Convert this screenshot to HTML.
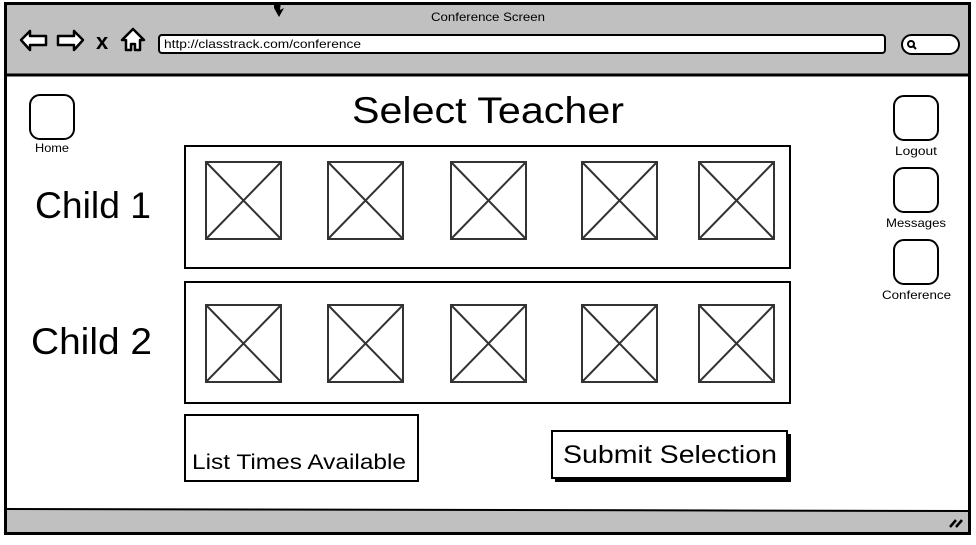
<!DOCTYPE html>
<html><head><style>
body{margin:0;width:976px;height:540px;overflow:hidden;background:#fff;font-family:"Liberation Sans",sans-serif}
svg text{font-family:"Liberation Sans",sans-serif;fill:#000}
</style></head><body>
<svg width="976" height="540" viewBox="0 0 976 540" xmlns="http://www.w3.org/2000/svg">
<rect x="5" y="3" width="965" height="72" fill="#c0c0c0"/>
<rect x="5" y="510" width="965" height="24" fill="#c0c0c0"/>
<rect x="5.5" y="3.5" width="964" height="530" fill="none" stroke="#000" stroke-width="3"/>
<line x1="5" y1="75" x2="970" y2="75" stroke="#000" stroke-width="3"/>
<line x1="5" y1="509" x2="970" y2="511" stroke="#000" stroke-width="2"/>
<text x="431" y="21" font-size="12" textLength="114" lengthAdjust="spacingAndGlyphs">Conference Screen</text>
<path d="M274 2 L281 2 L280 10 L284 8 L279 17 L274 8 Z" fill="#000"/>
<path d="M21 40 L30 31 L30 36 L46 36 L46 45 L30 45 L30 50 Z" fill="#fff" stroke="#000" stroke-width="2.5" stroke-linejoin="round"/>
<path d="M83 40 L74 31 L74 36 L58 36 L58 45 L74 45 L74 50 Z" fill="#fff" stroke="#000" stroke-width="2.5" stroke-linejoin="round"/>
<text x="96" y="49" font-size="22" font-weight="bold">x</text>
<path d="M133 29 L144 40 L140 40 L140 50 L135 50 L135 44 L131 44 L131 50 L126 50 L126 40 L122 40 Z" fill="#fff" stroke="#000" stroke-width="2.5" stroke-linejoin="round"/>
<rect x="159" y="35" width="726" height="18" rx="3" fill="#fff" stroke="#000" stroke-width="2"/>
<text x="164" y="48" font-size="12" textLength="197" lengthAdjust="spacingAndGlyphs">http://classtrack.com/conference</text>
<rect x="902" y="35" width="57" height="19" rx="9.5" fill="#fff" stroke="#000" stroke-width="2"/>
<circle cx="911" cy="44" r="3" fill="none" stroke="#000" stroke-width="2"/>
<line x1="913" y1="46" x2="916" y2="49" stroke="#000" stroke-width="2"/>
<path d="M950 527 L956 520 M956 527 L962 520" stroke="#000" stroke-width="2.5"/>
<rect x="30" y="95" width="44" height="44" rx="10" fill="#fff" stroke="#000" stroke-width="2"/>
<text x="35" y="152" font-size="12" textLength="34" lengthAdjust="spacingAndGlyphs">Home</text>
<rect x="894" y="96" width="44" height="44" rx="10" fill="#fff" stroke="#000" stroke-width="2"/>
<text x="895" y="155" font-size="12" textLength="42" lengthAdjust="spacingAndGlyphs">Logout</text>
<rect x="894" y="168" width="44" height="44" rx="10" fill="#fff" stroke="#000" stroke-width="2"/>
<text x="886" y="227" font-size="12" textLength="60" lengthAdjust="spacingAndGlyphs">Messages</text>
<rect x="894" y="240" width="44" height="44" rx="10" fill="#fff" stroke="#000" stroke-width="2"/>
<text x="882" y="299" font-size="12" textLength="69" lengthAdjust="spacingAndGlyphs">Conference</text>
<text x="352" y="123" font-size="37" textLength="272" lengthAdjust="spacingAndGlyphs">Select Teacher</text>
<text x="35" y="218" font-size="37" textLength="116" lengthAdjust="spacingAndGlyphs">Child 1</text>
<text x="31" y="354" font-size="37" textLength="121" lengthAdjust="spacingAndGlyphs">Child 2</text>
<rect x="185" y="146" width="605" height="122" fill="none" stroke="#000" stroke-width="2"/>
<rect x="185" y="282" width="605" height="121" fill="none" stroke="#000" stroke-width="2"/>
<g fill="#fff" stroke="#333" stroke-width="2">
<rect x="206" y="162" width="75" height="77"/><path d="M206 162 L281 239 M281 162 L206 239"/>
<rect x="328" y="162" width="75" height="77"/><path d="M328 162 L403 239 M403 162 L328 239"/>
<rect x="451" y="162" width="75" height="77"/><path d="M451 162 L526 239 M526 162 L451 239"/>
<rect x="582" y="162" width="75" height="77"/><path d="M582 162 L657 239 M657 162 L582 239"/>
<rect x="699" y="162" width="75" height="77"/><path d="M699 162 L774 239 M774 162 L699 239"/>
<rect x="206" y="305" width="75" height="77"/><path d="M206 305 L281 382 M281 305 L206 382"/>
<rect x="328" y="305" width="75" height="77"/><path d="M328 305 L403 382 M403 305 L328 382"/>
<rect x="451" y="305" width="75" height="77"/><path d="M451 305 L526 382 M526 305 L451 382"/>
<rect x="582" y="305" width="75" height="77"/><path d="M582 305 L657 382 M657 305 L582 382"/>
<rect x="699" y="305" width="75" height="77"/><path d="M699 305 L774 382 M774 305 L699 382"/>
</g>
<rect x="185" y="415" width="233" height="66" fill="#fff" stroke="#000" stroke-width="2"/>
<text x="192" y="469" font-size="21" textLength="214" lengthAdjust="spacingAndGlyphs">List Times Available</text>
<rect x="555" y="434" width="236" height="48" fill="#000"/>
<rect x="552" y="431" width="235" height="47" fill="#fff" stroke="#000" stroke-width="2"/>
<text x="563" y="463" font-size="25" textLength="214" lengthAdjust="spacingAndGlyphs">Submit Selection</text>
</svg>
</body></html>
